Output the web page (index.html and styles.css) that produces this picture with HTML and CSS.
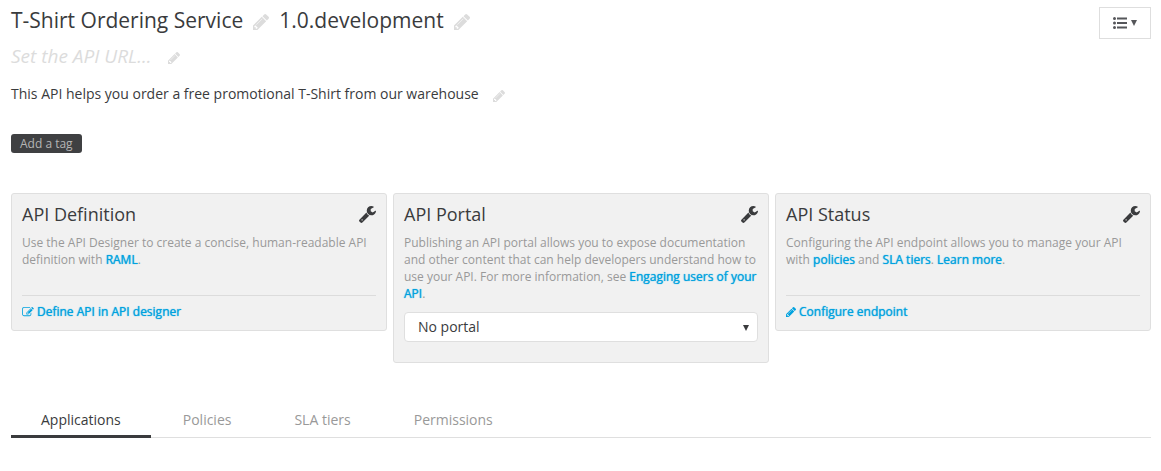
FILE: index.html
```html
<!DOCTYPE html>
<html lang="en">
<head>
<meta charset="utf-8">
<title>T-Shirt Ordering Service</title>
<link rel="stylesheet" href="styles.css">
</head>
<body>
<svg class="sprite" aria-hidden="true">
  <symbol id="pencil" viewBox="128 149 1515 1515"><path d="M491 1536l91-91-235-235-91 91v107h128v128h107zm523-928q0-22-22-22-10 0-17 7l-542 542q-7 7-7 17 0 22 22 22 10 0 17-7l542-542q7-7 7-17zm-54-192l416 416-832 832h-416v-416zm683 96q0 53-37 90l-166 166-416-416 166-165q36-38 90-38 53 0 91 38l235 234q37 39 37 91z"/></symbol>
  <symbol id="wrench" viewBox="85 128 1641 1643"><path d="M448 1472q0-26-19-45t-45-19-45 19-19 45 19 45 45 19 45-19 19-45zm644-420l-682 682q-37 37-90 37-52 0-91-37l-106-108q-38-36-38-90 0-53 38-91l681-681q39 98 114.500 173.500t173.500 114.500zm634-435q0 39-23 106-47 134-164.500 217.500t-258.500 83.500q-185 0-316.500-131.500t-131.500-316.500 131.500-316.500 316.500-131.500q58 0 121.500 16.500t107.500 46.500q16 11 16 28t-16 28l-293 169v224l193 107q5-3 79-48.500t135.500-81 70.500-35.500q15 0 23.500 10t8.500 25z"/></symbol>
  <symbol id="edit" viewBox="0 128 1792 1536"><path d="M888 1184l116-116-152-152-116 116v56h96v96h56zm440-720q-16-16-33 1l-350 350q-17 17-1 33t33-1l350-350q17-17 1-33zm80 594v190q0 119-84.500 203.500t-203.500 84.500h-832q-119 0-203.500-84.500t-84.500-203.500v-832q0-119 84.500-203.500t203.500-84.500h832q63 0 117 25 15 7 18 23 3 17-9 29l-49 49q-14 14-32 8-23-6-45-6h-832q-66 0-113 47t-47 113v832q0 66 47 113t113 47h832q66 0 113-47t47-113v-126q0-13 9-22l64-64q15-15 35-7t20 29zm-96-738l288 288-672 672h-288v-288zm444 132l-92 92-288-288 92-92q28-28 68-28t68 28l152 152q28 28 28 68t-28 68z"/></symbol>
  <symbol id="list" viewBox="0 0 14 12"><path d="M1.500 0a1.500 1.500 0 1 1 0 3a1.500 1.500 0 1 1 0-3zM1.500 4.500a1.500 1.500 0 1 1 0 3a1.500 1.500 0 1 1 0-3zM1.500 9a1.500 1.500 0 1 1 0 3a1.500 1.500 0 1 1 0-3zM4 .6h10v1.800H4zM4 5.100h10v1.800H4zM4 9.600h10v1.800H4z"/></symbol>
  <symbol id="caret" viewBox="0 0 6 6"><path d="M0 0h6L3 6z"/></symbol>
</svg>
<main class="page">
  <header class="header">
    <div class="summary">
      <div class="title-row">
        <h1 class="title">T-Shirt Ordering Service</h1>
        <button class="edit" aria-label="Edit name"><svg class="icon-lg"><use href="#pencil"/></svg></button>
        <span class="title">1.0.development</span>
        <button class="edit" aria-label="Edit version"><svg class="icon-lg"><use href="#pencil"/></svg></button>
      </div>
      <div class="url-row">
        <span class="url">Set the API URL...</span>
        <button class="edit" aria-label="Edit API URL"><svg class="icon-sm"><use href="#pencil"/></svg></button>
      </div>
      <div class="desc-row">
        <span>This API helps you order a free promotional T-Shirt from our warehouse</span>
        <button class="edit" aria-label="Edit description"><svg class="icon-sm"><use href="#pencil"/></svg></button>
      </div>
      <button class="tag">Add a tag</button>
    </div>
    <button class="menu" aria-label="Actions"><svg class="icon-list"><use href="#list"/></svg><svg class="caret"><use href="#caret"/></svg></button>
  </header>

  <div class="cards">
    <section class="card">
      <div class="card-head"><h2 class="card-title">API Definition</h2><button class="tool" aria-label="Definition settings"><svg class="icon-tool"><use href="#wrench"/></svg></button></div>
      <p class="text">Use the API Designer to create a concise, human-readable API definition with <a href="#raml">RAML</a>.</p>
      <div class="card-foot"><a class="action" href="#design"><svg class="icon-edit"><use href="#edit"/></svg>Define API in API designer</a></div>
    </section>
    <section class="card card-portal">
      <div class="card-head"><h2 class="card-title">API Portal</h2><button class="tool" aria-label="Portal settings"><svg class="icon-tool"><use href="#wrench"/></svg></button></div>
      <p class="text">Publishing an API portal allows you to expose documentation and other content that can help developers understand how to use your API. For more information, see <a href="#engage">Engaging users of your API</a>.</p>
      <div class="picker">
        <select class="select" aria-label="Portal"><option>No portal</option></select>
        <svg class="caret picker-caret"><use href="#caret"/></svg>
      </div>
    </section>
    <section class="card">
      <div class="card-head"><h2 class="card-title">API Status</h2><button class="tool" aria-label="Status settings"><svg class="icon-tool"><use href="#wrench"/></svg></button></div>
      <p class="text">Configuring the API endpoint allows you to manage your API with <a href="#policies">policies</a> and <a href="#tiers">SLA tiers</a>. <a href="#more">Learn more</a>.</p>
      <div class="card-foot"><a class="action" href="#endpoint"><svg class="icon-pen"><use href="#pencil"/></svg>Configure endpoint</a></div>
    </section>
  </div>

  <nav class="tabs">
    <a class="tab active" href="#applications">Applications</a>
    <a class="tab" href="#policies">Policies</a>
    <a class="tab" href="#tiers">SLA tiers</a>
    <a class="tab" href="#permissions">Permissions</a>
  </nav>
</main>
</body>
</html>
```
FILE: styles.css
```css
* { box-sizing: border-box; }
body {
  margin: 0;
  background: #fff;
  color: #3a3b3d;
  font: 14px/20px "Open Sans", sans-serif;
}
button, select { font: inherit; color: inherit; }
button { border: 0; padding: 0; background: none; cursor: pointer; }
svg { display: block; fill: currentColor; }
h1, h2, p { margin: 0; font-weight: 400; }
a { color: #00a2df; text-decoration: none; }
.sprite { display: none; }
.page { padding: 5px 10px 0 11px; }

.header { display: flex; justify-content: space-between; align-items: flex-start; }
.title-row, .url-row, .desc-row { display: flex; align-items: center; }
.title-row { gap: 10px; height: 30px; }
.title { font-size: 21px; line-height: 30px; }
.edit { color: #dcdcdc; padding-top: 3px; }
.icon-lg { width: 16px; height: 16px; }
.icon-sm { width: 12px; height: 12px; }
.url-row { gap: 16px; margin-top: 8px; }
.url { color: #dcdcdc; font-size: 19px; line-height: 26px; font-style: italic; }
.desc-row { gap: 14px; margin-top: 15px; }
.tag {
  display: block;
  margin-top: 30px;
  padding: 0 9px;
  border-radius: 3px;
  background: #3f4042;
  color: #b5b5b5;
  font-size: 12px;
  line-height: 19px;
}
.menu {
  display: flex;
  align-items: center;
  justify-content: center;
  gap: 4px;
  width: 52px;
  height: 32px;
  margin-top: 2px;
  border: 1px solid #dedede;
  color: #55565a;
}
.icon-list { width: 14px; height: 12px; }
.caret { width: 6px; height: 6px; }

.cards { display: grid; grid-template-columns: repeat(3, 1fr); align-items: start; gap: 6px; margin-top: 40px; }
.card {
  padding: 7px 10px 8px;
  border: 1px solid #dfdfdf;
  border-radius: 3px;
  background: #f1f1f1;
}
.card-portal { padding-bottom: 20px; }
.card-head { display: flex; justify-content: space-between; align-items: center; }
.card-title { font-size: 18px; line-height: 26px; }
.icon-tool { width: 17px; height: 17px; }
.text { margin-top: 7px; color: #999; font-size: 12px; line-height: 17px; }
.text a, .action { text-shadow: 0 0 1px currentColor; }
.card-foot { margin-top: 27px; padding: 6px 0 1px; border-top: 1px solid #dcdcdc; }
.action { display: flex; align-items: center; gap: 3px; font-size: 12px; line-height: 19px; }
.icon-edit { width: 12px; height: 10px; }
.icon-pen { width: 10px; height: 10px; }
.picker { position: relative; margin-top: 10px; }
.select {
  display: block;
  width: 100%;
  height: 30px;
  padding: 0 13px;
  border: 1px solid #dfdfdf;
  border-radius: 4px;
  background: #fff;
  appearance: none;
}
.picker-caret { position: absolute; top: 13px; right: 9px; pointer-events: none; }

.tabs { display: flex; gap: 1px; margin-top: 41px; border-bottom: 1px solid #dfdfdf; }
.tab {
  padding: 6px 31px 5px;
  border-bottom: 3px solid transparent;
  margin-bottom: -1px;
  color: #999;
}
.tab.active { padding-left: 30px; padding-right: 30px; color: #3a3b3d; border-bottom-color: #3a3b3d; }
```
